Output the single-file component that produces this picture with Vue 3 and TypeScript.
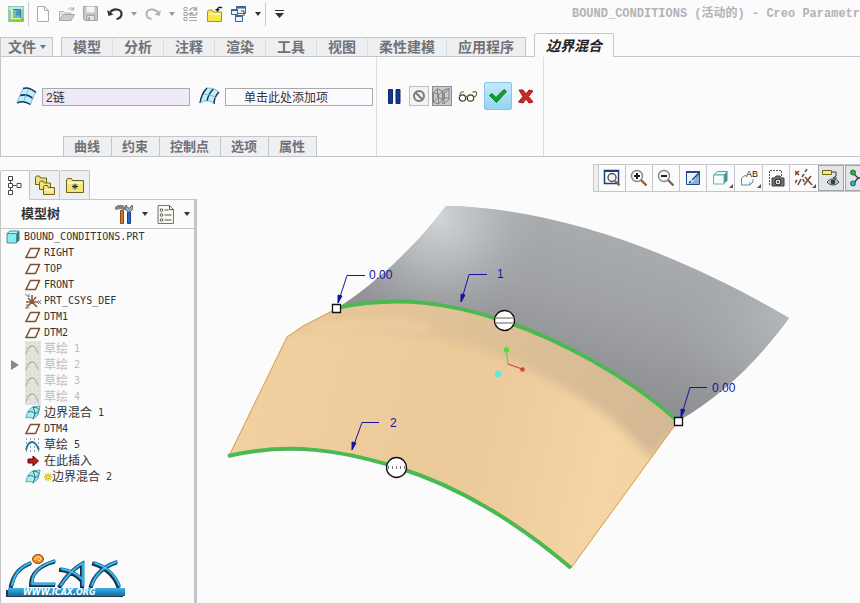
<script setup lang="ts">
import { ref } from 'vue'

interface TreeItem {
  icon: string
  zh?: string
  en?: string
  dim?: boolean
  marker?: boolean
  fresh?: boolean
}

interface Tool {
  icon: string
  label: string
  caret?: boolean
}

interface ViewTool {
  icon: string
  label: string
  pressed?: boolean
  more?: boolean
}

const fileTools: Tool[] = [
  { icon: 'new', label: '新建' },
  { icon: 'open', label: '打开' },
  { icon: 'save', label: '保存' },
  { icon: 'undo', label: '撤消', caret: true },
  { icon: 'redo', label: '重做', caret: true },
  { icon: 'regen', label: '重新生成' },
  { icon: 'folder', label: '关闭' },
  { icon: 'windows', label: '窗口', caret: true },
]

const ribbonTabs = ['模型', '分析', '注释', '渲染', '工具', '视图', '柔性建模', '应用程序']
const panelTabs = ['曲线', '约束', '控制点', '选项', '属性']

const viewTools: ViewTool[] = [
  { icon: 'refit', label: '重新调整' },
  { icon: 'zoomin', label: '放大' },
  { icon: 'zoomout', label: '缩小' },
  { icon: 'repaint', label: '重画' },
  { icon: 'shade', label: '显示样式', more: true },
  { icon: 'views', label: '已命名视图', more: true },
  { icon: 'camera', label: '视图管理器' },
  { icon: 'datum', label: '基准显示', more: true },
  { icon: 'annot', label: '注释显示', pressed: true },
  { icon: 'spin', label: '旋转中心', pressed: true },
]

const tree: TreeItem[] = [
  { icon: 'plane', en: 'RIGHT' },
  { icon: 'plane', en: 'TOP' },
  { icon: 'plane', en: 'FRONT' },
  { icon: 'csys', en: 'PRT_CSYS_DEF' },
  { icon: 'plane', en: 'DTM1' },
  { icon: 'plane', en: 'DTM2' },
  { icon: 'sketchdim', zh: '草绘', en: ' 1', dim: true },
  { icon: 'sketchdim', zh: '草绘', en: ' 2', dim: true, marker: true },
  { icon: 'sketchdim', zh: '草绘', en: ' 3', dim: true },
  { icon: 'sketchdim', zh: '草绘', en: ' 4', dim: true },
  { icon: 'blend', zh: '边界混合', en: ' 1' },
  { icon: 'plane', en: 'DTM4' },
  { icon: 'sketch', zh: '草绘', en: ' 5' },
  { icon: 'insert', zh: '在此插入' },
  { icon: 'blend', zh: '边界混合', en: ' 2', fresh: true },
]

const firstChain = ref('2链')
const secondChain = ref('单击此处添加项')
</script>

<template>
  <div class="app">
    <svg class="sprite" aria-hidden="true">
      <symbol id="i-new" viewBox="0 0 16 16"><path d="M2.500 .5h7l4 4v11h-11zM9.500 .5v4h4" fill="#fff" stroke="#a9abae" /></symbol>
      <symbol id="i-open" viewBox="0 0 16 16"><path d="M.5 14V5.500h4l1.500 1.500h6v2" fill="#e6e7e8" stroke="#b0b2b4" /><path d="M.5 14.500L4 8.500h11.500l-3.500 6z" fill="#c9cbcd" stroke="#a5a7a9" /><path d="M9 4c1-2.500 3.500-2.500 5-1M14.500 1v3h-3" fill="none" stroke="#a5a7a9" /></symbol>
      <symbol id="i-save" viewBox="0 0 16 16"><path d="M.5 .5h14v14H2l-1.500-1.500z" fill="#c3c5c8" stroke="#a2a4a7" /><path d="M3.500 .5h8v6h-8z" fill="#f5f5f5" /><path d="M4 9.500h7.500v5H4z" fill="#e4e5e6" stroke="#a2a4a7" /><path d="M5 11h2v3H5z" fill="#aaa" /></symbol>
      <symbol id="i-undo" viewBox="0 0 16 16"><path d="M3 6.500C6 2 14.500 2.500 14.500 8c0 3-2 4.500-5 5" fill="none" stroke="#333" stroke-width="2.200" /><path d="M0 4l1.500 6L6.500 8.500z" fill="#333" /></symbol>
      <symbol id="i-redo" viewBox="0 0 16 16"><path d="M13 6.500C10 2 1.500 2.500 1.500 8c0 3 2 4.500 5 5" fill="none" stroke="#b0b2b4" stroke-width="2" /><path d="M16 4l-1.500 6-5-1.500z" fill="#b0b2b4" /></symbol>
      <symbol id="i-regen" viewBox="0 0 16 16"><path d="M1 1.500h3v3H1zM1 6.500h3v3H1zM1 11.500h3v3H1zM6 14.500h8M6 11.500h8M4 8h3" fill="none" stroke="#a5a7a9" /><path d="M7 5c0-4 5-4 6-1.500M13.500 1v3h-3M14 6c0 4-5 4-6 1.500M7.500 10V7h3" fill="none" stroke="#a5a7a9" stroke-width="1.300" /></symbol>
      <symbol id="i-folder" viewBox="0 0 16 16"><path d="M.5 15.500v-10l1-1.500h4l1 2h8v9.500z" fill="#f6ea45" stroke="#a0962c" /><path d="M1.500 7h12v2h-12z" fill="#fdf8a8" /><path d="M15 2c-2-1.500-4-1-5 2" fill="none" stroke="#222" stroke-width="1.400" /><path d="M8 3l2.500 3L13 3z" fill="#222" /></symbol>
      <symbol id="i-windows" viewBox="0 0 16 16"><g fill="#eef4fa" stroke="#3f6695"><path d="M5.500 .5h9v7h-9z" /><path d="M.5 3.500h6v5h-6zM4.500 9.500h7v6h-7z" /></g><path d="M5 .5h10v2H5zM0 3h7v2H0zM4 9h8v2H4z" fill="#3f6695" /><path d="M10 5l3 0v5" fill="none" stroke="#27466e" /></symbol>
      <symbol id="i-caret" viewBox="0 0 6 4"><path d="M0 0h6L3 4z" fill="currentColor" /></symbol>

      <symbol id="i-chain1" viewBox="0 0 21 19"><path d="M1 16C2 12 3.500 9 5 8 5 5 6 2 8 1c4-.6 8 .8 12 4l-3 5-1 6-2 2C10 14 5 13 1 16z" fill="#bdeefa" /><path d="M7 1.500C11 0 16 2 20 5.500M4 8.500c5-1.500 9-.5 13 3M1 16c5-2.500 9-1.500 13.500 1.500" fill="none" stroke="#12325a" stroke-width="1.500" /><path d="M7.500 2C4 6 3 11 1 16M13.500 2C10 6 9 10 8 14M20 5.500C17 9 16 13 14.500 17.500" fill="none" stroke="#7db9d4" /></symbol>
      <symbol id="i-chain2" viewBox="0 0 21 19"><path d="M1 16C2 10 4 4 8 1c5 0 9 1 12 4-3 4-4 8-5 12-4-4-9-4-14-1z" fill="#bdeefa" /><path d="M1 16C2 9 5 4 8 1M8 14c1-5 3-9 6.500-12M15 17c0-5 2-9 5-12" fill="none" stroke="#12325a" stroke-width="1.500" /><path d="M8 1c5 0 9 1 12 4M4 7.500c5-.5 9 .5 13 3.500M1 16c5-3 10-3 14 1" fill="none" stroke="#7db9d4" /></symbol>
      <symbol id="i-pause" viewBox="0 0 13 15"><path d="M.5 .5h4v14h-4zM8 .5h4v14H8z" fill="#123a86" stroke="#0d2c6c" /></symbol>
      <symbol id="i-none" viewBox="0 0 18 18"><circle cx="9" cy="9" r="5" fill="none" stroke="#77797b" stroke-width="2" /><path d="M5.500 5.500l7 7" stroke="#77797b" stroke-width="2" /></symbol>
      <symbol id="i-attach" viewBox="0 0 18 18"><path d="M.5 5.500l4-3.500 5 2-3 3.500zM.5 5.500v10l5 1.500V7.500M9.500 4v8l-4 5M.5 15.500l4-5 5 1.500M4.500 2v8M11 3v8l-2 6M11 3l5-1.500v11L11 17V7l5-5.500M11 11h5" fill="none" stroke="#777a7d" stroke-width=".9" /></symbol>
      <symbol id="i-glasses" viewBox="0 0 20 12"><circle cx="4.500" cy="8" r="3.200" fill="#fff" stroke="#423b27" stroke-width="1.200" /><circle cx="12.500" cy="8" r="3.200" fill="#fff" stroke="#423b27" stroke-width="1.200" /><path d="M7.500 7c0-1 2-1 2 0M1.500 7C2 3 3 1 6 2M15.500 7c3 0 3.500-3 3-4.500s-3-1-4 0" fill="none" stroke="#7d7048" stroke-width="1.200" /></symbol>
      <symbol id="i-ok" viewBox="0 0 18 14"><path d="M.5 6.500L3 4.500l4 4L15 .5l2.500 2L7.500 13.500z" fill="#11a02c" stroke="#0b7c20" /></symbol>
      <symbol id="i-cancel" viewBox="0 0 16 15"><path d="M1 1h4l3 4 3-4 4 1-4.500 5.500L15 13l-4 1-3-4-3 4-4.500-1L5 7.500z" fill="#cc2a22" stroke="#9d1813" /></symbol>

      <symbol id="i-modeltree" viewBox="0 0 14 20"><path d="M2.500 5v11M5 10.500h3" stroke="#444" /><path d="M.5 1.500h4v4h-4zM.5 8.500h4v4h-4zM9 8.500h4v4H9zM.5 15.500h4v4h-4z" fill="#fff" stroke="#444" /></symbol>
      <symbol id="i-folders" viewBox="0 0 20 20"><g fill="#f2e27c" stroke="#6d6220"><path d="M.5 9.500v-7l1-1.500h3l1 2h6v6.500z" /><path d="M4.500 14.500v-7l1-1.500h3l1 2h6v6.500z" /><path d="M8.500 19.500V12l1-1.500h3l1 2h6v7z" /></g><path d="M9.500 14h9v2h-9z" fill="#fbf3b8" /></symbol>
      <symbol id="i-favorites" viewBox="0 0 18 16"><path d="M.5 15.500V3l1-1.500h4l1 2h11v12z" fill="#f4e672" stroke="#6d6220" /><path d="M1.500 5h15v2h-15z" fill="#fcf5b8" /><path d="M9 6.500v6M6 9.500h6M7 7.500l4 4M11 7.500l-4 4" stroke="#1d2755" /></symbol>
      <symbol id="i-tools" viewBox="0 0 18 20"><path d="M0 3l3-2h5l3 3-1 2H8L6 5 0 6z" fill="#7c848a" /><path d="M5.500 6.500h3v13h-3z" fill="#da7423" stroke="#8a471b" /><path d="M12.500 8.500h3v11h-3z" fill="#2c6ac0" stroke="#1b4280" /><path d="M11 1l-1 4 3 3h2l3-3-1-4-2 3h-2z" fill="#a4b1bd" stroke="#556270" /></symbol>
      <symbol id="i-settings" viewBox="0 0 17 20"><path d="M.5 1.500H12l4 4v14H.5z" fill="#fafaf0" stroke="#77786c" /><path d="M12 1.500v4h4M7 6h4M7 11h7M7 16h7" fill="none" stroke="#55564c" /><g fill="#fff" stroke="#55564c"><circle cx="4" cy="6" r="1.300" /><circle cx="4" cy="11" r="1.300" /><circle cx="4" cy="16" r="1.300" /></g></symbol>

      <symbol id="i-part" viewBox="0 0 14 14"><path d="M1 3.500L4 1h9l-2.500 2.500z" fill="#c6f7f7" stroke="#4c8c94" /><path d="M10.500 3.500L13.500 1v9.500L10.500 13z" fill="#377e86" /><path d="M1 3.500h9.500V13H1z" fill="#86eef0" stroke="#4c8c94" /></symbol>
      <symbol id="i-plane" viewBox="0 0 16 16"><path d="M5.500 3.500h9l-4 9H1z" fill="#fff" stroke="#80502e" stroke-width="1.500" /></symbol>
      <symbol id="i-csys" viewBox="0 0 16 16"><path d="M7 9V2M1 9h12M7 9l-5 5M7 9L3 5M7 9l5 5M7 9l4-5" stroke="#895b33" stroke-width="1.600" /><path d="M0 1l4 3M4 1v3M0 15h4M1 12l3 0-3 3M13 7l3 4M16 7l-3 4" fill="none" stroke="#777" /></symbol>
      <symbol id="i-sketchdim" viewBox="0 0 16 16"><path d="M0 0h16v16H0z" fill="#e3e3df" /><path d="M1 2h15M1 6h15M1 10h15M1 14h15" stroke="#c2c2be" stroke-dasharray="1 3" /><path d="M1 13c1-4 3-8 6-8s5 3 6 8" fill="none" stroke="#b9b79e" stroke-width="1.300" /></symbol>
      <symbol id="i-sketch" viewBox="0 0 16 16"><path d="M1 2h14M1 6h14M1 10h14M1 14h14" stroke="#2e4e92" stroke-dasharray="1 3" /><path d="M1 13c1-4 3-8 6-8s5 3 7 8" fill="none" stroke="#257687" stroke-width="1.800" /></symbol>
      <symbol id="i-blend" viewBox="0 0 16 16"><path d="M1 13C2 7 4 4 8 2l7-1-2 9-5 4c-2-2-4-2-7-1z" fill="#a8edf0" stroke="#5ba7ae" /><path d="M3 7c4-1 5 0 7 2l4-3M8 2c1 3 2 4 2 7l-2 5M8 2c3 0 5 1 6.500 3" fill="none" stroke="#28717b" /></symbol>
      <symbol id="i-insert" viewBox="0 0 16 16"><path d="M3 6h5V3l5.500 5L8 13v-3H3z" fill="#cc1717" stroke="#4f1010" /></symbol>
      <symbol id="i-fresh" viewBox="0 0 8 10"><path d="M4 1v8M0 5h8M1 2l6 6M7 2L1 8" stroke="#d8c31a" stroke-width="1.300" /><path d="M3 4h2v2H3z" fill="#fff14a" /></symbol>

      <symbol id="i-refit" viewBox="0 0 18 18"><path d="M1.500 1.500h14v13h-14z" fill="#fff" stroke="#1f3f78" stroke-width="1.500" /><path d="M1 1h15v2H1z" fill="#1f3f78" /><circle cx="9" cy="8.500" r="4" fill="#f3f3f3" stroke="#555" stroke-width="1.400" /><path d="M12 12l4.500 4.500" stroke="#8a5a3c" stroke-width="2" /></symbol>
      <symbol id="i-zoomin" viewBox="0 0 18 18"><circle cx="7" cy="7" r="5.500" fill="#f7f7f7" stroke="#85878a" stroke-width="1.400" /><path d="M4 7h6M7 4v6" stroke="#222" stroke-width="2" /><path d="M11 11l5.500 5.500" stroke="#8a5a3c" stroke-width="2.200" /></symbol>
      <symbol id="i-zoomout" viewBox="0 0 18 18"><circle cx="7" cy="7" r="5.500" fill="#f7f7f7" stroke="#85878a" stroke-width="1.400" /><path d="M4 7h6" stroke="#222" stroke-width="2" /><path d="M11 11l5.500 5.500" stroke="#8a5a3c" stroke-width="2.200" /></symbol>
      <symbol id="i-repaint" viewBox="0 0 18 18"><path d="M2.500 2.500h13v13h-13z" fill="#e9f2fb" stroke="#234887" /><path d="M2 2h14v2H2z" fill="#234887" /><path d="M4 15c4-1 8-4 8-9l3-1v10z" fill="#86aedb" /><path d="M15 4L8 11M7 12l-2 2" stroke="#234887" stroke-width="1.500" /></symbol>
      <symbol id="i-shade" viewBox="0 0 18 18"><path d="M1.500 6l4-3.500h10L12 6z" fill="#d9fbfb" stroke="#639ca0" /><path d="M12 6l3.500-3.500v9L12 15z" fill="#43959d" /><path d="M1.500 6H12v9H1.500z" fill="#f2ffff" stroke="#7bacb0" /></symbol>
      <symbol id="i-views" viewBox="0 0 18 18"><path d="M1.500 16V9L5 6.500h1M1.500 16H10l3-3v-3M10 16v-3" fill="none" stroke="#5796a1" /></symbol>
      <symbol id="i-camera" viewBox="0 0 18 18"><path d="M2.500 16V1.500h12V8" fill="#fff" stroke="#555" stroke-dasharray="2 1" /><path d="M5 9h3l1-2h4l1 2h3v8H5z" fill="#6f7173" stroke="#3b3c3d" /><circle cx="11" cy="13" r="3" fill="#d8dadb" stroke="#222" /><circle cx="11" cy="13" r="1" fill="#333" /></symbol>
      <symbol id="i-datum" viewBox="0 0 18 18"><path d="M0 2l4 4M4 2L0 6M12 0l-2 3M9 5L7 8M6 10l-3 6M10 8l7 8M16 7l-7 9M2 11l-2 3M8 10l1 3" fill="none" stroke="#7c4a34" stroke-width="1.600" /></symbol>
      <symbol id="i-annot" viewBox="0 0 18 18"><path d="M.5 1.500h9v4h-9z" fill="#f9ee7b" stroke="#6e6420" /><path d="M10 3h4v4l-3 2h4" fill="none" stroke="#333" /><path d="M5 13c3-4 9-4 12 0-3 4-9 4-12 0z" fill="#b4c4cb" stroke="#3d464a" /><circle cx="11" cy="13" r="2.400" fill="#314047" /></symbol>
      <symbol id="i-spin" viewBox="0 0 18 18"><path d="M4 4l5 5-5 6M9 9h9" fill="none" stroke="#333" stroke-width="1.300" /><circle cx="4" cy="3.500" r="2.500" fill="#2bb34b" stroke="#176c2c" /><circle cx="4" cy="14.500" r="2.500" fill="#27b3b3" stroke="#176c6c" /></symbol>
    </svg>

    <header class="titlebar">
      <svg class="appicon" viewBox="0 0 16 16" aria-hidden="true">
        <path d="M0 0h16v16H0z" fill="#8fcfae" /><path d="M1 1h14v3H1z" fill="#bfe3f2" /><path d="M3.500 3.500h9v9h-9z" fill="#6fb9d8" stroke="#2f7f93" /><path d="M4 3v10h9" fill="none" stroke="#e4f08a" stroke-width="2" /><path d="M8 4.500h4v5H8z" fill="#4a97c0" /><path d="M1 14.500h14V12" fill="none" stroke="#7ac943" stroke-width="2" />
      </svg>
      <span class="sep"></span>
      <template v-for="t in fileTools" :key="t.icon">
        <button class="tool" :aria-label="t.label"><svg class="ic16"><use :href="'#i-' + t.icon" /></svg></button>
        <button v-if="t.caret" class="tool" :class="['caretbtn', t.icon]" :aria-label="t.label + '列表'"><svg class="caret"><use href="#i-caret" /></svg></button>
      </template>
      <span class="sep"></span>
      <button class="tool" aria-label="自定义快速访问工具栏"><svg class="morecaret" viewBox="0 0 14 8"><path d="M3 .5h9" stroke="#333" /><path d="M3 3h9L7.500 8z" fill="#333" /></svg></button>
      <h1 class="title">BOUND_CONDITIONS (活动的) - Creo Parametr</h1>
    </header>

    <nav class="ribbon">
      <button class="rtab file">文件<svg class="caret"><use href="#i-caret" /></svg></button>
      <div class="rgroup">
        <button v-for="t in ribbonTabs" :key="t" class="rtab">{{ t }}</button>
      </div>
      <button class="rtab active">边界混合</button>
    </nav>

    <section class="dashboard">
      <div class="collect">
        <div class="fields">
          <label for="chain1" aria-label="第一方向"><svg class="chain"><use href="#i-chain1" /></svg></label>
          <input id="chain1" v-model="firstChain" class="field focus" type="text" />
          <label for="chain2" aria-label="第二方向"><svg class="chain"><use href="#i-chain2" /></svg></label>
          <input id="chain2" v-model="secondChain" class="field hint" type="text" />
        </div>
        <div class="ptabs">
          <button v-for="t in panelTabs" :key="t" class="ptab">{{ t }}</button>
        </div>
      </div>
      <div class="controls">
        <button class="tool" aria-label="暂停"><svg class="pause"><use href="#i-pause" /></svg></button>
        <div class="toggles">
          <button class="toggle" aria-label="无预览"><svg><use href="#i-none" /></svg></button>
          <button class="toggle on" aria-label="连接预览"><svg><use href="#i-attach" /></svg></button>
        </div>
        <button class="tool" aria-label="预览"><svg class="glasses"><use href="#i-glasses" /></svg></button>
        <button class="accept" aria-label="确定"><svg class="ok"><use href="#i-ok" /></svg></button>
        <button class="tool" aria-label="取消"><svg class="cancel"><use href="#i-cancel" /></svg></button>
      </div>
    </section>

    <main class="work">
      <aside class="side">
        <div class="stabs">
          <button class="stab current" aria-label="模型树"><svg class="mt"><use href="#i-modeltree" /></svg></button>
          <button class="stab" aria-label="文件夹浏览器"><svg class="fb"><use href="#i-folders" /></svg></button>
          <button class="stab" aria-label="收藏夹"><svg class="fv"><use href="#i-favorites" /></svg></button>
          <span class="rest"></span>
        </div>
        <div class="panel">
          <div class="phead">
            <h2>模型树</h2>
            <button class="tool" aria-label="树工具"><svg class="tools"><use href="#i-tools" /></svg></button>
            <svg class="caret"><use href="#i-caret" /></svg>
            <button class="tool" aria-label="树设置"><svg class="tools"><use href="#i-settings" /></svg></button>
            <svg class="caret"><use href="#i-caret" /></svg>
          </div>
          <div class="root"><svg class="ic14"><use href="#i-part" /></svg><span class="en">BOUND_CONDITIONS.PRT</span></div>
          <ul class="tree">
            <li v-for="(n, i) in tree" :key="i" :class="{ dim: n.dim }">
              <span class="lead"><svg v-if="n.marker" class="marker" viewBox="0 0 8 10"><path d="M0 0l8 5-8 5z" fill="#888" /></svg></span>
              <svg class="ic16"><use :href="'#i-' + n.icon" /></svg>
              <span class="name"><svg v-if="n.fresh" class="fresh"><use href="#i-fresh" /></svg><span v-if="n.zh">{{ n.zh }}</span><span v-if="n.en" class="en">{{ n.en }}</span></span>
            </li>
          </ul>
          <svg class="brand" viewBox="0 0 122 48" role="img" aria-label="ICAX">
            <defs>
              <linearGradient id="bar" x1="0" y1="0" x2="0" y2="1"><stop offset="0" stop-color="#3fb2e2" /><stop offset="1" stop-color="#0a6da8" /></linearGradient>
              <path id="mark" d="M7 34C9 24 15 16 25 12M49 10C35 14 27 22 27 33h22M56 34C61 26 69 17 78 12v22M57 18c8 1 15 5 20 10M90 12c10 3 20 11 24 22M111 11C99 15 90 24 87 34" />
            </defs>
            <g fill="none" stroke-linecap="square">
              <use href="#mark" x="-1" y="1" stroke="#1b2b3c" stroke-width="4" />
              <use href="#mark" stroke="#1586c4" stroke-width="3" />
              <use href="#mark" stroke="#6bd0f2" stroke-width="1" />
            </g>
            <ellipse cx="33" cy="8" rx="5.500" ry="4.500" fill="#f08a1c" stroke="#8c5017" />
            <path d="M30 9c0-4 6-4 6-1 0 2-4 2-3 0" fill="none" stroke="#fff" />
            <path d="M1 39h117v7H1z" fill="#2b3a48" /><path d="M3 37h117v8H3z" fill="url(#bar)" />
            <text x="18" y="44" class="brandtext">WWW.ICAX.ORG</text>
          </svg>
        </div>
      </aside>

      <section class="viewport">
        <svg class="scene" viewBox="197 157 663 446" role="img" aria-label="边界混合曲面">
          <defs>
            <linearGradient id="gray" gradientUnits="userSpaceOnUse" x1="600" y1="215" x2="540" y2="400"><stop offset="0" stop-color="#abaeb0" /><stop offset=".45" stop-color="#9fa1a4" /><stop offset="1" stop-color="#88898c" /></linearGradient>
            <radialGradient id="lightA" gradientUnits="userSpaceOnUse" cx="440" cy="218" r="110"><stop offset="0" stop-color="#cfd4d7" /><stop offset=".4" stop-color="#bfc3c6" stop-opacity=".75" /><stop offset="1" stop-color="#a5a8aa" stop-opacity="0" /></radialGradient>
            <radialGradient id="lightB" gradientUnits="userSpaceOnUse" cx="788" cy="318" r="110"><stop offset="0" stop-color="#b4b7ba" /><stop offset="1" stop-color="#a5a8aa" stop-opacity="0" /></radialGradient>
            <linearGradient id="tan" gradientUnits="userSpaceOnUse" x1="230" y1="400" x2="650" y2="490"><stop offset="0" stop-color="#f3d0a0" /><stop offset=".5" stop-color="#ecc998" /><stop offset=".65" stop-color="#eecb9b" /><stop offset=".88" stop-color="#f5d5a5" /><stop offset="1" stop-color="#f3d2a2" /></linearGradient>
            <linearGradient id="band" gradientUnits="userSpaceOnUse" x1="300" y1="320" x2="660" y2="420"><stop offset="0" stop-color="#e9c799" /><stop offset=".5" stop-color="#dfc097" /><stop offset="1" stop-color="#d4b994" /></linearGradient>
            <filter id="soft" filterUnits="userSpaceOnUse" x="200" y="260" width="520" height="240"><feGaussianBlur stdDeviation="5" /></filter>
            <filter id="glow" filterUnits="userSpaceOnUse" x="200" y="260" width="520" height="240"><feGaussianBlur stdDeviation="4" /></filter>
            <clipPath id="tanclip"><path d="M229 456L287 337L303 326L336 309C400 295 450 303 504 321S625 374 678 421L571 568C510 516 452 484 396 467S290 442 229 456z" /></clipPath>
            <path id="back" d="M336 309C372 286 416 247 446 206C560 208 680 254 789 318C764 353 724 396 678 421C625 374 558 339 504 321S400 295 336 309z" />
          </defs>
          <use href="#back" fill="url(#gray)" />
          <use href="#back" fill="url(#lightA)" />
          <use href="#back" fill="url(#lightB)" />
          <g clip-path="url(#tanclip)">
            <path d="M220 290h470v290H220z" fill="url(#tan)" />
            <path d="M280 335L336 300C400 285 450 295 504 313S640 370 690 415L652 458C620 425 600 405 530 370C470 340 390 322 280 335z" fill="url(#band)" filter="url(#soft)" />
            <path d="M312 328c46-6 80-6 118 0" fill="none" stroke="#f8dbb1" stroke-width="6" opacity=".6" filter="url(#glow)" />
          </g>
          <path d="M229 456L287 337L303 326L336 309M678 421L571 568" fill="none" stroke="#d29a45" />
          <path d="M336 308C400 295 450 303 504 321S625 374 678 421" fill="none" stroke="#4ab952" stroke-width="4" />
          <path d="M228 456C290 442 340 450 396 467S510 516 571 568" fill="none" stroke="#4ab952" stroke-width="4" />
          <g class="leader">
            <path d="M338 303L347 275.500H365M461 302L469 274.500H487M681 417L690 387.500H707M352 450L362 422.500H379" />
            <path class="tip" d="M338 303v-8l4 1zM461 302v-8l4 1zM681 417v-8l4 1zM352 450v-8l4 1z" />
          </g>
          <g class="dim3d">
            <text x="369" y="279">0.00</text>
            <text x="497" y="278">1</text>
            <text x="712" y="392">0.00</text>
            <text x="390" y="427">2</text>
          </g>
          <path d="M332.500 304.500h8v8h-8zM674.500 417.500h8v8h-8z" fill="#fff" stroke="#111" stroke-width="1.300" />
          <circle cx="504.500" cy="320.500" r="10" fill="#fff" stroke="#111" stroke-width="1.300" />
          <path d="M495 318h19M495 323h19" stroke="#96968c" stroke-width="1.500" />
          <circle cx="396.500" cy="467.500" r="10" fill="#fff" stroke="#111" stroke-width="1.300" />
          <path d="M388 467.500h18" stroke="#777" stroke-width="3" stroke-dasharray="1 3" />
          <path d="M508 364L506.500 351" stroke="#4fd63f" /><circle cx="506.500" cy="350" r="2.700" fill="#4fdd3b" />
          <path d="M508 364L522 369" stroke="#c23a2a" /><circle cx="522.500" cy="369.500" r="2.200" fill="#cf4632" />
          <path d="M508 364L499 373" stroke="#9adfd0" /><circle cx="498" cy="374" r="3.200" fill="#5fe6e2" />
        </svg>
        <div class="viewbar">
          <span class="grip"></span>
          <button v-for="v in viewTools" :key="v.icon" class="vtool" :class="{ pressed: v.pressed, wide: v.more }" :aria-label="v.label">
            <svg class="ic18"><use :href="'#i-' + v.icon" /><text v-if="v.icon === 'views'" x="6" y="8" class="ab">AB</text></svg>
            <svg v-if="v.more" class="more" viewBox="0 0 4 4"><path d="M4 0v4H0z" fill="#555" /></svg>
          </button>
        </div>
      </section>
    </main>
  </div>
</template>

<style>
body {
  background: #fbfbfc;
}
</style>

<style scoped>
.app {
  display: flex;
  flex-direction: column;
  min-height: 100vh;
  overflow: hidden;
  background: #fbfbfc;
  color: #333;
  font-family: "Liberation Sans", "Noto Sans CJK SC", sans-serif;
  font-size: 12px;
}
.app *,
.app {
  box-sizing: border-box;
}
.sprite {
  position: absolute;
  width: 0;
  height: 0;
}
button {
  margin: 0;
  padding: 0;
  border: 0;
  background: none;
  color: inherit;
  font: inherit;
}
svg {
  display: block;
  flex: none;
}
.tool {
  flex: none;
}
.ic14 { width: 14px; height: 14px; }
.ic16 { width: 16px; height: 16px; }
.ic18 { width: 18px; height: 18px; overflow: visible; }
.tools { width: 18px; height: 20px; }
.caret { width: 6px; height: 4px; color: #333; }

.titlebar {
  display: flex;
  align-items: center;
  gap: 8px;
  height: 28px;
  padding-left: 8px;
}
.appicon { width: 16px; height: 16px; }
.sep {
  flex: none;
  width: 1px;
  height: 24px;
  margin: 0 -2px 0 -4px;
  background: #c9cacc;
}
.caretbtn.undo .caret,
.caretbtn.redo .caret { color: #999; }
.morecaret { width: 14px; height: 8px; }
.title {
  flex: none;
  margin: 0 0 0 auto;
  color: #b2b3b5;
  font: bold 12px/20px "Liberation Mono", "Noto Sans CJK SC", monospace;
  white-space: nowrap;
}

.ribbon {
  display: flex;
  align-items: flex-end;
  height: 29px;
  border-bottom: 1px solid #c4c5c8;
}
.rgroup {
  display: flex;
  margin: 0 8px;
  border-right: 1px solid #c4c5c8;
}
.rtab {
  height: 19px;
  padding: 0 11px;
  border: 1px solid #c4c5c8;
  border-width: 1px 0 0 1px;
  background: #eeeff1;
  color: #707277;
  font-size: 14px;
  font-weight: bold;
  line-height: 17px;
  white-space: nowrap;
}
.rgroup .rtab + .rtab { border-left-color: #dcdde0; }
.rtab.file {
  display: flex;
  align-items: center;
  gap: 4px;
  padding: 0 6px 0 7px;
  border-right-width: 1px;
}
.rtab.file .caret { color: #707277; }
.rtab.active {
  height: 24px;
  margin-bottom: -1px;
  border-right-width: 1px;
  border-radius: 2px 2px 0 0;
  background: #fbfbfc;
  color: #222;
  font-style: italic;
  line-height: 24px;
}

.dashboard {
  display: flex;
  height: 100px;
  border: 1px solid #c4c5c8;
  border-width: 0 0 1px 1px;
}
.collect {
  display: flex;
  flex-direction: column;
  justify-content: space-between;
  padding: 30px 3px 0 15px;
  border-right: 1px solid #dcdde0;
}
.fields {
  display: flex;
  align-items: center;
  gap: 5px;
}
.chain { width: 21px; height: 19px; }
.field {
  width: 148px;
  height: 18px;
  padding: 0 3px;
  border: 1px solid #a9aaae;
  background: #fbfaff;
  color: #333;
  font: 12px/16px "Liberation Sans", "Noto Sans CJK SC", sans-serif;
}
.field + label { margin-left: 4px; }
.focus {
  outline: 0;
  background: #efe9f8;
}
.hint { padding-left: 18px; }
.ptabs {
  display: flex;
  padding-left: 47px;
}
.ptab {
  height: 20px;
  padding: 0 11px 0 10px;
  border: 1px solid #c4c5c8;
  border-width: 1px 0 0 1px;
  background: #eeeff1;
  color: #707277;
  font-size: 13px;
  font-weight: bold;
  line-height: 18px;
}
.ptab:last-child { border-right-width: 1px; }
.controls {
  display: flex;
  align-items: center;
  gap: 6px;
  padding: 0 9px 21px 11px;
  border-right: 1px solid #dcdde0;
}
.pause { width: 13px; height: 15px; margin-right: 2px; }
.toggles {
  display: flex;
  gap: 3px;
}
.toggle {
  width: 20px;
  height: 20px;
  border: 1px solid #c0c1c4;
  background: #f3f3f4;
}
.toggle svg { width: 18px; height: 18px; }
.toggle.on {
  border-color: #8a8c8f;
  background: #c9cbcd;
}
.glasses { width: 20px; height: 12px; }
.accept {
  display: grid;
  place-items: center;
  width: 28px;
  height: 28px;
  border: 1px solid #86c5e8;
  border-radius: 2px;
  background: linear-gradient(#c4e9fa, #93d4f5);
}
.ok { width: 18px; height: 14px; }
.cancel { width: 16px; height: 15px; }

.work {
  display: flex;
  flex: 1;
}
.side {
  display: flex;
  flex: none;
  flex-direction: column;
  width: 197px;
  padding-top: 13px;
}
.stabs {
  display: flex;
  height: 30px;
}
.stab {
  display: grid;
  place-items: center;
  width: 30px;
  border: 1px solid #c4c5c8;
  border-left-width: 0;
  border-radius: 2px 2px 0 0;
  background: #eeeff1;
}
.stab.current {
  border-left-width: 1px;
  border-bottom-color: #fbfbfc;
  background: #fbfbfc;
}
.rest {
  flex: 1;
  border-bottom: 1px solid #c4c5c8;
}
.mt { width: 14px; height: 20px; }
.fb { width: 20px; height: 20px; }
.fv { width: 18px; height: 16px; }
.panel {
  display: flex;
  flex: 1;
  flex-direction: column;
  border: solid #c4c5c8;
  border-width: 0 3px 0 1px;
}
.phead {
  display: flex;
  align-items: center;
  gap: 9px;
  height: 29px;
  padding: 0 4px 0 20px;
  border-bottom: 1px solid #c4c5c8;
}
.phead h2 {
  flex: 1;
  margin: 0;
  font-size: 13px;
  line-height: 20px;
}
.root {
  display: flex;
  align-items: center;
  gap: 4px;
  height: 16px;
  padding-left: 5px;
}
.tree {
  margin: 0;
  padding: 0;
  list-style: none;
}
.tree li {
  display: flex;
  align-items: center;
  height: 16px;
}
.lead {
  width: 24px;
  padding-left: 10px;
}
.marker { width: 8px; height: 10px; }
.name {
  display: flex;
  align-items: center;
  padding-left: 3px;
  line-height: 16px;
  white-space: pre;
}
.fresh { width: 8px; height: 10px; }
.en {
  font-family: "DejaVu Sans Mono", monospace;
  font-size: 10px;
  line-height: 16px;
}
.dim { color: #bcbdbe; }
.brand {
  width: 122px;
  height: 48px;
  margin: auto 0 4px 4px;
}
.brandtext {
  fill: #fff;
  font: italic bold 8px "DejaVu Sans", sans-serif;
}

.viewport {
  display: grid;
  flex: 1;
  align-items: start;
  min-width: 0;
}
.scene {
  grid-area: 1 / 1;
  width: 100%;
  height: auto;
}
.leader {
  fill: none;
  stroke: #1414a0;
}
.tip { fill: #1414a0; }
.dim3d {
  fill: #1414a0;
  font: 12px "Liberation Sans", sans-serif;
}
.viewbar {
  display: flex;
  grid-area: 1 / 1;
  justify-self: end;
  width: 267px;
  height: 28px;
  margin-top: 7px;
  overflow: hidden;
  border: 1px solid #c4c5c8;
  border-right: 0;
}
.grip {
  flex: none;
  width: 4px;
  background: #eeeff1;
}
.vtool {
  display: grid;
  flex: none;
  place-items: center;
  position: relative;
  width: 27px;
  border-left: 1px solid #c4c5c8;
}
.vtool.wide { width: 28px; }
.vtool.pressed {
  width: 26px;
  margin-left: 1px;
  border: 1px solid #a2a4a7;
  background: #e3e4e6;
}
.more {
  position: absolute;
  right: 1px;
  bottom: 3px;
  width: 4px;
  height: 4px;
}
.ab {
  fill: #222;
  font: 9px "Liberation Sans", sans-serif;
}
</style>
